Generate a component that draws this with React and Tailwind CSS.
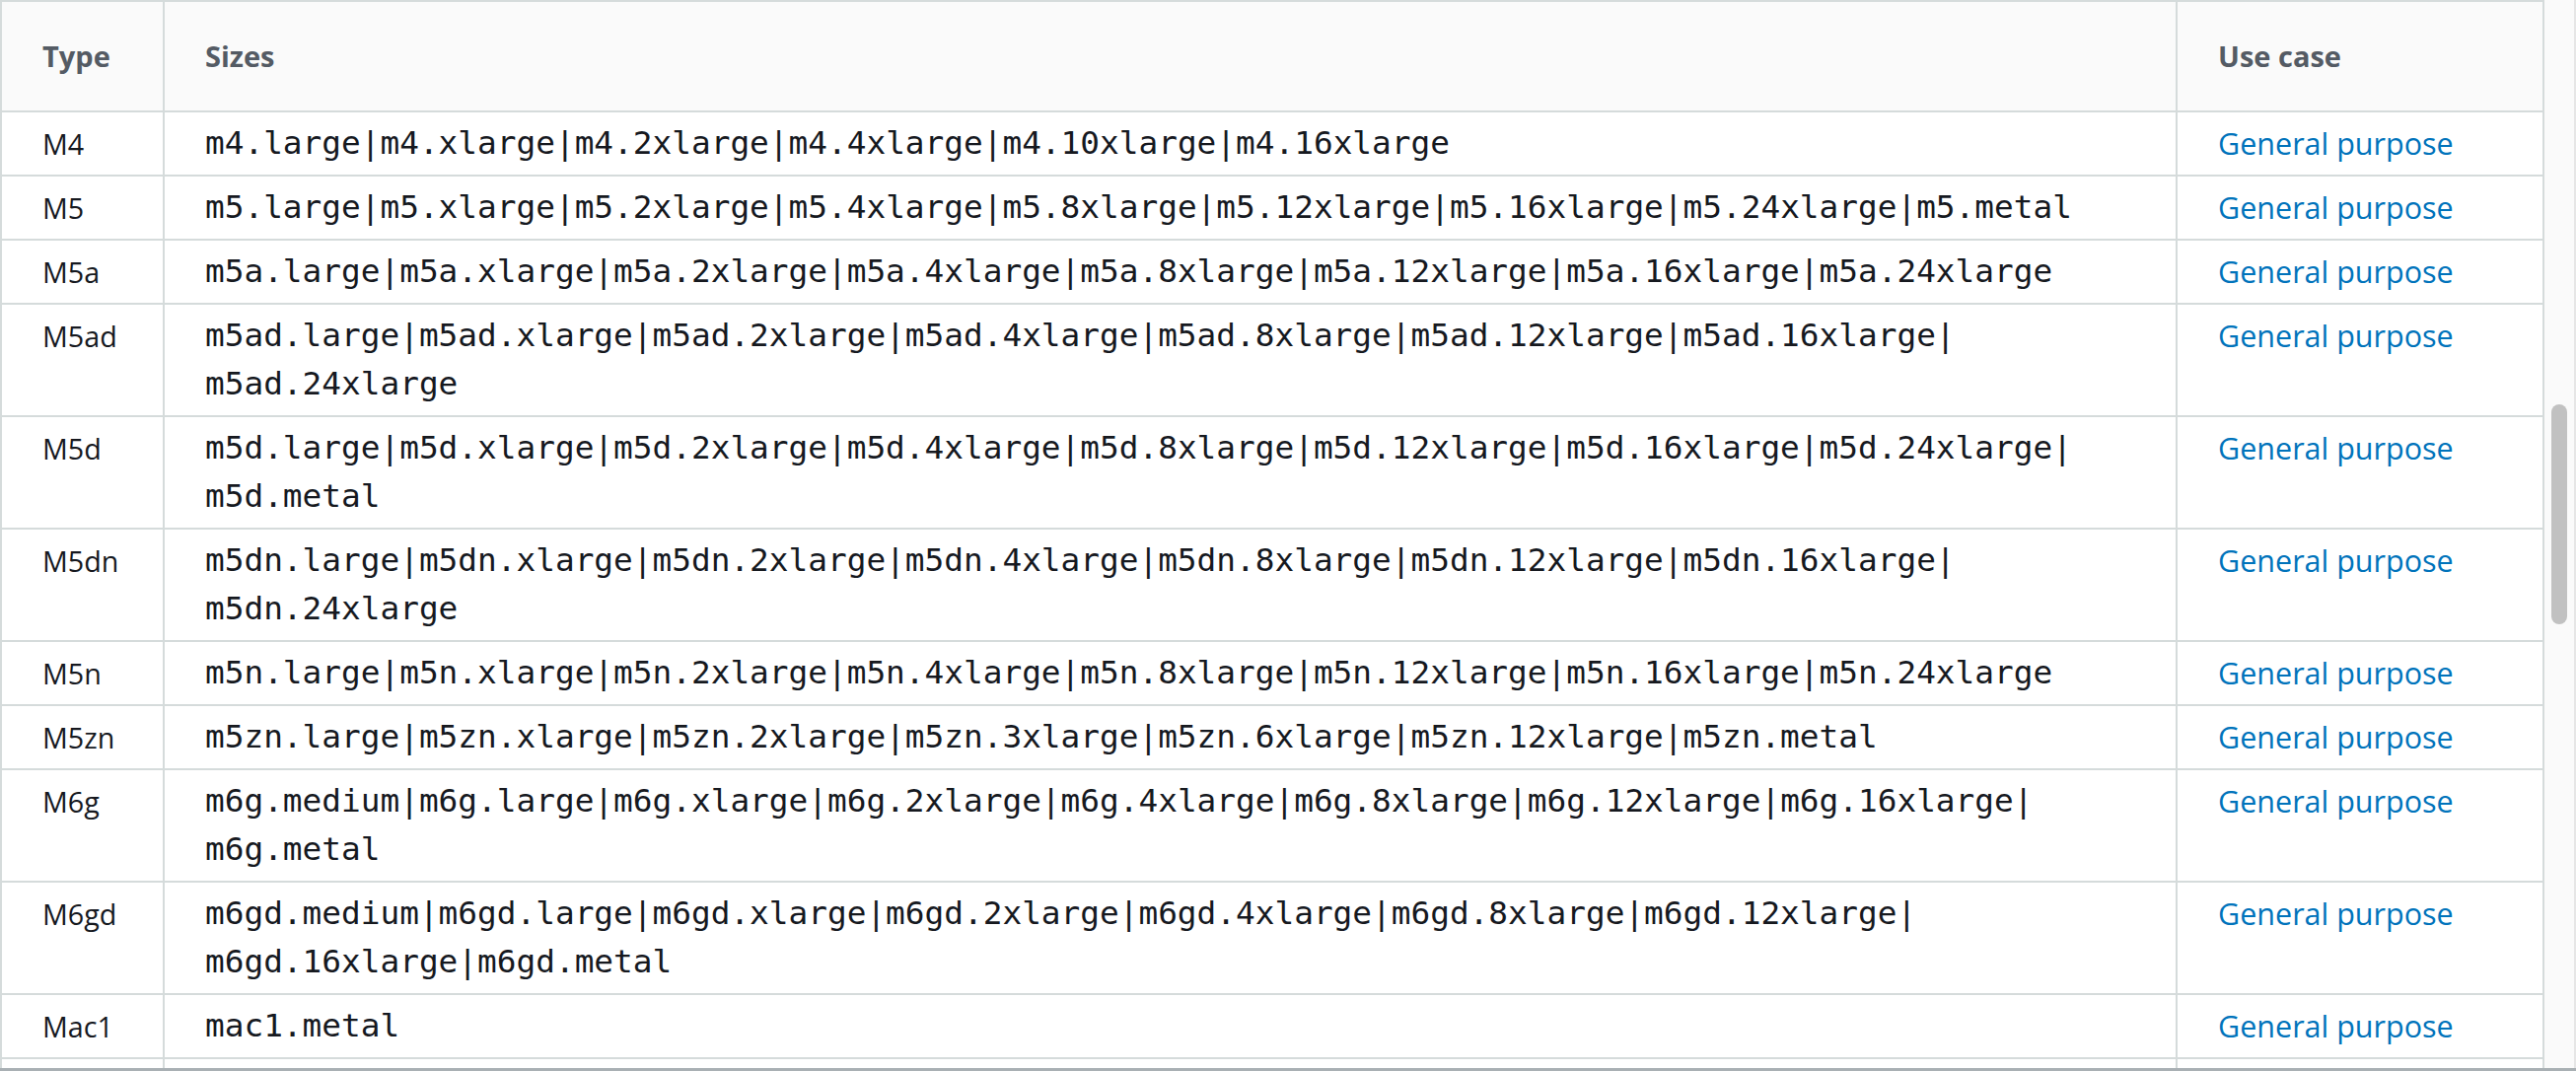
const rows = [
  { type: "M4", sizes: "m4.large|m4.xlarge|m4.2xlarge|m4.4xlarge|m4.10xlarge|m4.16xlarge" },
  { type: "M5", sizes: "m5.large|m5.xlarge|m5.2xlarge|m5.4xlarge|m5.8xlarge|m5.12xlarge|m5.16xlarge|m5.24xlarge|m5.metal" },
  { type: "M5a", sizes: "m5a.large|m5a.xlarge|m5a.2xlarge|m5a.4xlarge|m5a.8xlarge|m5a.12xlarge|m5a.16xlarge|m5a.24xlarge" },
  { type: "M5ad", sizes: "m5ad.large|m5ad.xlarge|m5ad.2xlarge|m5ad.4xlarge|m5ad.8xlarge|m5ad.12xlarge|m5ad.16xlarge|m5ad.24xlarge" },
  { type: "M5d", sizes: "m5d.large|m5d.xlarge|m5d.2xlarge|m5d.4xlarge|m5d.8xlarge|m5d.12xlarge|m5d.16xlarge|m5d.24xlarge|m5d.metal" },
  { type: "M5dn", sizes: "m5dn.large|m5dn.xlarge|m5dn.2xlarge|m5dn.4xlarge|m5dn.8xlarge|m5dn.12xlarge|m5dn.16xlarge|m5dn.24xlarge" },
  { type: "M5n", sizes: "m5n.large|m5n.xlarge|m5n.2xlarge|m5n.4xlarge|m5n.8xlarge|m5n.12xlarge|m5n.16xlarge|m5n.24xlarge" },
  { type: "M5zn", sizes: "m5zn.large|m5zn.xlarge|m5zn.2xlarge|m5zn.3xlarge|m5zn.6xlarge|m5zn.12xlarge|m5zn.metal" },
  { type: "M6g", sizes: "m6g.medium|m6g.large|m6g.xlarge|m6g.2xlarge|m6g.4xlarge|m6g.8xlarge|m6g.12xlarge|m6g.16xlarge|m6g.metal" },
  { type: "M6gd", sizes: "m6gd.medium|m6gd.large|m6gd.xlarge|m6gd.2xlarge|m6gd.4xlarge|m6gd.8xlarge|m6gd.12xlarge|m6gd.16xlarge|m6gd.metal" },
  { type: "Mac1", sizes: "mac1.metal" },
];

const Sizes = ({ text }) => {
  const parts = text.split("|");
  return (
    <>
      {parts.map((p, i) => (
        <span key={p}>
          {p}
          {i < parts.length - 1 && (
            <>
              |<wbr />
            </>
          )}
        </span>
      ))}
    </>
  );
};

const App = () => {
  return (
    <div className="w-[2612px] h-[1086px] flex flex-col bg-white overflow-hidden font-['Open_Sans',sans-serif]">
      <div className="flex flex-1 min-h-0">
        {/* table */}
        <div className="w-[2580px] shrink-0 border-l-2 border-t-2 border-r-2 border-[#d5dbdb] overflow-hidden">
          <div className="grid grid-cols-[165px_2041px_1fr] h-[112px] bg-[#fafafa] border-b-2 border-[#d5dbdb] text-[29px] font-bold text-[#545b64]">
            <div className="flex items-center pl-[41px] border-r-2 border-[#d5dbdb]">Type</div>
            <div className="flex items-center pl-[41px] border-r-2 border-[#d5dbdb]">Sizes</div>
            <div className="flex items-center pl-[41px]">Use case</div>
          </div>

          {rows.map((r) => (
            <div
              key={r.type}
              className="grid grid-cols-[165px_2041px_1fr] border-b-2 border-[#d5dbdb] leading-[49px]"
            >
              <div className="py-[7px] pl-[41px] border-r-2 border-[#d5dbdb] text-[28.7px] text-[#16191f]">
                {r.type}
              </div>
              <div className="py-[7px] px-[41px] border-r-2 border-[#d5dbdb] text-[32.75px] text-[#16191f] font-['DejaVu_Sans_Mono',monospace]">
                <Sizes text={r.sizes} />
              </div>
              <div className="py-[7px] pl-[41px] text-[30.5px]">
                <a href="#" className="text-[#0073bb]">
                  General purpose
                </a>
              </div>
            </div>
          ))}

          {/* next row, cut off by the frame */}
          <div className="grid grid-cols-[165px_2041px_1fr] h-[65px]">
            <div className="border-r-2 border-[#d5dbdb]" />
            <div className="border-r-2 border-[#d5dbdb]" />
            <div />
          </div>
        </div>

        {/* scrollbar */}
        <div className="flex-1 bg-[#fafafa] border-r-2 border-[#e6e6e6] flex justify-center">
          <div className="w-[16px] h-[223px] mt-[410px] rounded-full bg-[#c1c1c1]" />
        </div>
      </div>
      <div className="h-[3px] bg-[#a9b0b4]" />
    </div>
  );
};

export default App;
